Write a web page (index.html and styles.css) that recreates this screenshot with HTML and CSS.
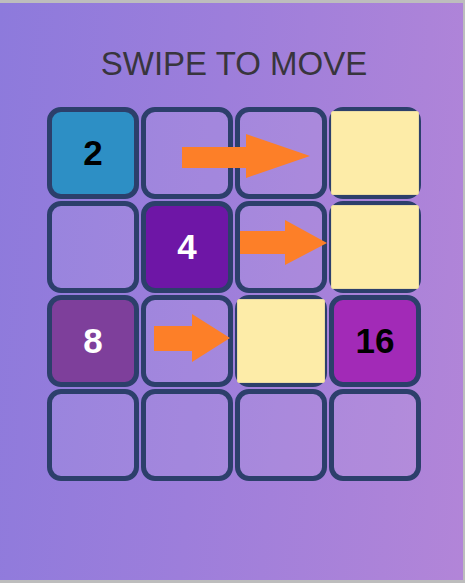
FILE: index.html
```html
<!DOCTYPE html>
<html lang="en">
<head>
<meta charset="utf-8">
<title>Swipe to move</title>
<link rel="stylesheet" href="styles.css">
</head>
<body>
<main class="screen">
  <h1 class="title">SWIPE TO MOVE</h1>
  <div class="board">
    <div class="cell tile-2">2</div>
    <div class="cell"></div>
    <div class="cell"></div>
    <div class="cell"><div class="target"></div></div>

    <div class="cell"></div>
    <div class="cell tile-4">4</div>
    <div class="cell"></div>
    <div class="cell"><div class="target"></div></div>

    <div class="cell tile-8">8</div>
    <div class="cell"></div>
    <div class="cell"><div class="target"></div></div>
    <div class="cell tile-16">16</div>

    <div class="cell"></div>
    <div class="cell"></div>
    <div class="cell"></div>
    <div class="cell"></div>

    <svg class="arrows" width="374" height="374" viewBox="0 0 374 374" aria-hidden="true">
      <polygon points="135,40 199,40 199,27 263,49 199,71 199,61 135,61"/>
      <polygon points="193,124 238,124 238,113 280,136 238,158 238,147 193,147"/>
      <polygon points="107,219 145,219 145,207 183,231 145,255 145,244 107,244"/>
    </svg>
  </div>
</main>
</body>
</html>
```
FILE: styles.css
```css
html, body {
  margin: 0;
  padding: 0;
}

body {
  background: #bdbdbd;
  font-family: "Liberation Sans", Arial, sans-serif;
  height: 583px;
  overflow: hidden;
}

.screen {
  box-sizing: border-box;
  width: 463px;
  height: 577px;
  margin-top: 3px;
  padding-left: 5px;
  background: linear-gradient(95deg, #8d7adc 0%, #9d7edb 45%, #b285d8 100%);
  display: flex;
  flex-direction: column;
  align-items: center;
}

.title {
  margin: 42px 0 0;
  font-size: 33px;
  line-height: 38px;
  font-weight: normal;
  color: #38353d;
  letter-spacing: 0;
}

.board {
  position: relative;
  margin-top: 24px;
  display: grid;
  grid-template-columns: repeat(4, 92px);
  grid-auto-rows: 92px;
  gap: 2px;
}

.cell {
  box-sizing: border-box;
  border: 5px solid #2c3f6b;
  border-radius: 14px;
  background: rgba(255, 255, 255, 0.07);
  display: flex;
  align-items: center;
  justify-content: center;
  font-size: 35px;
  font-weight: bold;
  color: #000;
}

.tile-2 { background: #2d8fc5; color: #000; }
.tile-4 { background: #6e16a6; color: #fff; }
.tile-8 { background: #7e3f9b; color: #fff; }
.tile-16 { background: #a22ab7; color: #000; }

.target {
  flex: none;
  box-sizing: border-box;
  width: 88px;
  height: 84px;
  background: #fdeca8;
  border: 1px solid #e9dba3;
  border-radius: 2px;
}

.arrows {
  position: absolute;
  left: 0;
  top: 0;
  pointer-events: none;
}

.arrows polygon {
  fill: #fd7f28;
}
```
